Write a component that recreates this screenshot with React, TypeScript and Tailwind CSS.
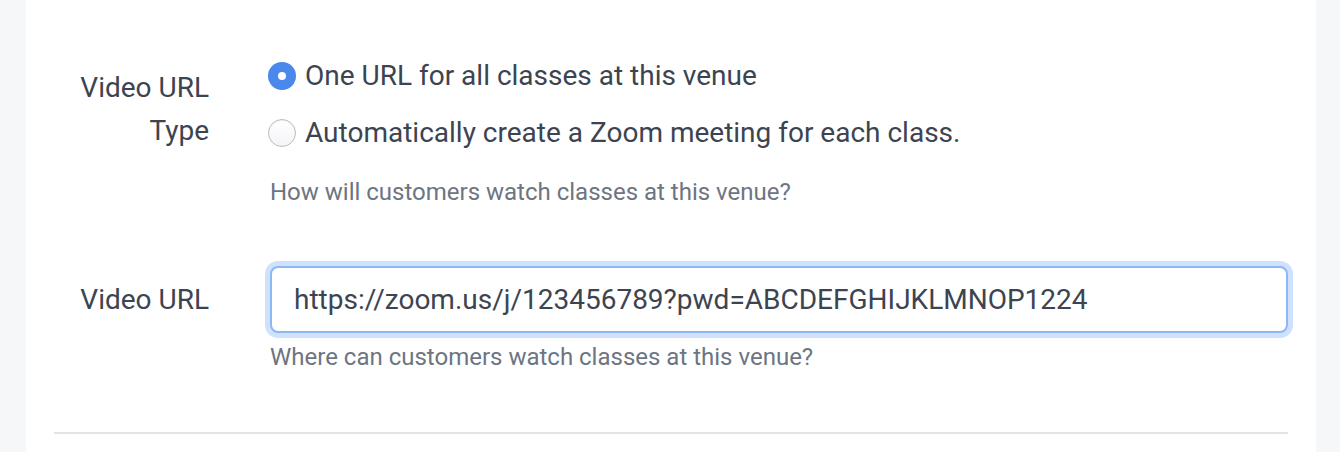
import { useState } from "react"

type Option = { id: string; label: string }

const options: Option[] = [
  { id: "single", label: "One URL for all classes at this venue" },
  { id: "zoom", label: "Automatically create a Zoom meeting for each class." },
]

function Radio({ checked, onClick }: { checked: boolean; onClick: () => void }) {
  return checked ? (
    <button
      type="button"
      onClick={onClick}
      className="flex h-[28px] w-[28px] shrink-0 items-center justify-center rounded-full bg-[#4a88ec]"
    >
      <span className="h-[8px] w-[8px] rounded-full bg-white" />
    </button>
  ) : (
    <button
      type="button"
      onClick={onClick}
      className="h-[28px] w-[28px] shrink-0 rounded-full border border-[#b9bcc1] bg-gradient-to-b from-white to-[#f3f4f6] shadow-[inset_0_1px_1px_rgba(0,0,0,0.06)]"
    />
  )
}

export default function App() {
  const [type, setType] = useState("single")
  const [url, setUrl] = useState("https://zoom.us/j/123456789?pwd=ABCDEFGHIJKLMNOP1224")

  return (
    <div className="flex h-[452px] w-[1340px] bg-[#f6f7f9] font-['Roboto',sans-serif] text-[#3d4451]">
      <div className="ml-[26px] w-[1290px] bg-white pl-[28px] pr-[28px]">
        <div className="flex pt-[54px]">
          <div className="mt-[12px] w-[155px] text-right text-[28px] leading-[43px]">
            Video URL
            <br />
            Type
          </div>
          <div className="ml-[59px] flex-1">
            {options.map((o, idx) => (
              <label
                key={o.id}
                className={`flex h-[44px] cursor-pointer items-center gap-[9px] ${idx > 0 ? "mt-[13px]" : ""}`}
              >
                <Radio checked={type === o.id} onClick={() => setType(o.id)} />
                <span className="text-[28px]">{o.label}</span>
              </label>
            ))}
            <p className="mt-[22px] pl-[2px] text-[24px] leading-[30px] text-[#6d7582]">
              How will customers watch classes at this venue?
            </p>
          </div>
        </div>

        <div className="mt-[59px] flex items-center">
          <div className="w-[155px] text-right text-[28px]">Video URL</div>
          <div className="ml-[61px] flex-1">
            <input
              value={url}
              onChange={(e) => setUrl(e.target.value)}
              className="h-[67px] w-full rounded-[8px] border-2 border-[#8ab9f6] bg-white px-[22px] text-[28px] text-[#3d4451] outline-none ring-[5px] ring-[#cfe1fc]"
            />
          </div>
        </div>
        <p className="ml-[216px] mt-[9px] text-[24px] leading-[30px] text-[#6d7582]">
          Where can customers watch classes at this venue?
        </p>

        <div className="mt-[60px] h-[2px] bg-[#e4e4e4]" />
      </div>
    </div>
  )
}
